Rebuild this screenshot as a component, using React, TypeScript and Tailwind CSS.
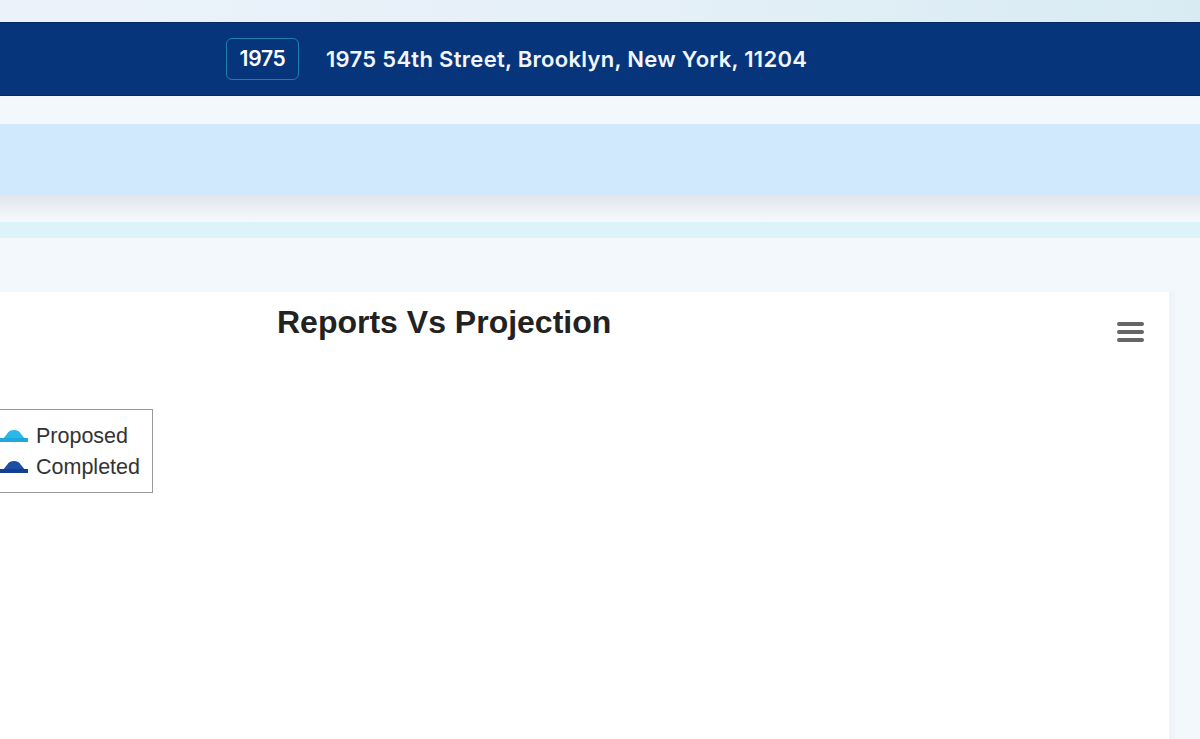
import React from 'react';

const sans = { fontFamily: '"Liberation Sans", Arial, sans-serif' };

function LegendMark({ fill, line }: { fill: string; line: string }) {
  return (
    <svg width="28" height="16" viewBox="0 0 28 16" className="shrink-0">
      <path d="M2 12 L7 6 Q9 2 14 2 Q19 2 21 6 L26 12 Z" fill={fill} />
      <rect x="0" y="10" width="28" height="4" fill={line} />
    </svg>
  );
}

function MenuIcon() {
  return (
    <div className="flex flex-col gap-[4px] w-[27px]">
      <span className="block h-[4px] rounded-sm bg-[#666]" />
      <span className="block h-[4px] rounded-sm bg-[#666]" />
      <span className="block h-[4px] rounded-sm bg-[#666]" />
    </div>
  );
}

export default function App() {
  return (
    <div className="w-[1200px] h-[739px] overflow-hidden flex flex-col bg-[#f3f8fc]">
      {/* top strip */}
      <div className="h-[22px] shrink-0 bg-gradient-to-r from-[#ebf2fa] via-[#e6f0f8] to-[#d8ebf3]" />

      {/* property header */}
      <header
        className="h-[74px] shrink-0 flex items-center pl-[226px] gap-[27px] bg-[#06357b] border-t border-b border-[#022a66] text-white"
        style={{ fontFamily: 'Inter, "Open Sans", sans-serif' }}
      >
        <span className="h-[42px] w-[73px] flex items-center justify-center rounded-md border border-[#1b82ad] text-[21px] font-semibold tracking-[-0.3px]">
          1975
        </span>
        <span className="text-[22px] font-semibold tracking-[0.3px] text-[#f2f6fc]">
          1975 54th Street, Brooklyn, New York, 11204
        </span>
      </header>

      <div className="h-[28px] shrink-0 bg-[#f3f8fd]" />
      <div className="h-[72px] shrink-0 bg-[#d0e9fd]" />
      <div className="h-[26px] shrink-0 bg-gradient-to-b from-[#e3e7ec] to-[#f6f9fc]" />
      <div className="h-[16px] shrink-0 bg-[#dcf3fa]" />

      {/* chart panel */}
      <main className="flex-1 flex pt-[54px]">
        <section className="w-[1169px] bg-white flex flex-col" style={sans}>
          <div className="flex pt-[14px]">
            <h2 className="pl-[277px] text-[32px] leading-[32px] font-bold text-[#222]">Reports Vs Projection</h2>
            <div className="ml-auto mr-[25px] mt-[16px]">
              <MenuIcon />
            </div>
          </div>

          <div className="mt-[67px] -ml-[12px] w-[165px] border border-[#999] pl-[11px] pt-[14px] pb-[13px] flex flex-col gap-[7px] text-[21.5px] leading-[24px] text-[#333]">
            <div className="flex items-center gap-[8px]">
              <LegendMark fill="#2bb7e9" line="#1fa8dc" />
              <span>Proposed</span>
            </div>
            <div className="flex items-center gap-[8px]">
              <LegendMark fill="#1d4fa3" line="#143f8e" />
              <span>Completed</span>
            </div>
          </div>
        </section>
        <div className="w-[6px] bg-[#eef4f9]" />
      </main>
    </div>
  );
}
